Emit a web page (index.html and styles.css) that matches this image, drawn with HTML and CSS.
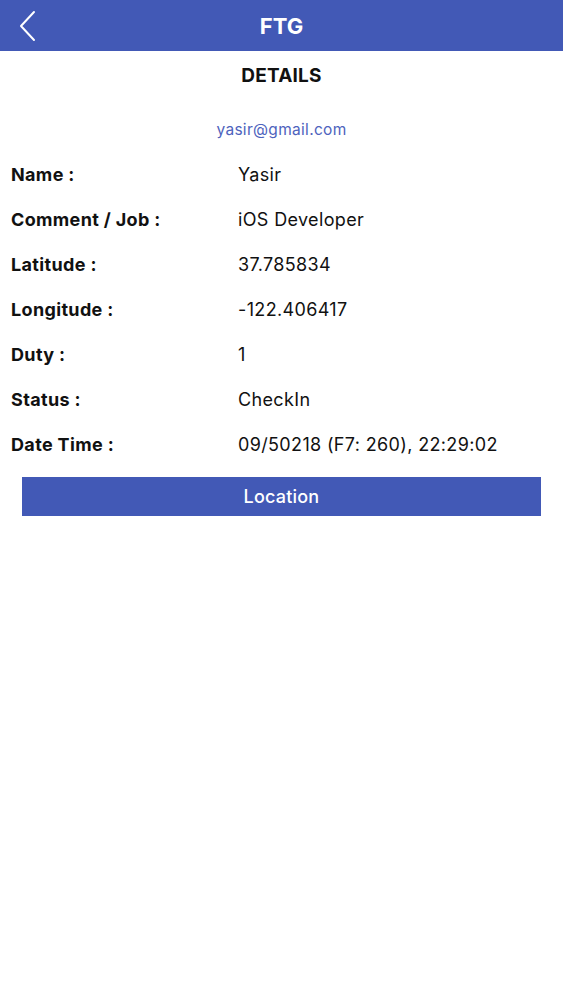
FILE: index.html
```html
<!DOCTYPE html>
<html lang="en">

<head>
    <meta charset="UTF-8">
    <meta name="viewport" content="width=device-width, initial-scale=1.0">
    <title>FTG - Details</title>
    <link rel="stylesheet" href="styles.css">
</head>

<body>

    <!-- Barra superior -->
    <header class="barra">
        <a class="atras" href="#">
            <svg width="20" height="32" viewBox="0 0 20 32">
                <path d="M16 2 L3 16 L16 30" fill="none" stroke="#fff" stroke-width="2" stroke-linecap="round" stroke-linejoin="round" />
            </svg>
        </a>
        <h1 class="titulo">FTG</h1>
    </header>

    <main class="detalles">
        <h2 class="subtitulo">DETAILS</h2>
        <p class="email">yasir@gmail.com</p>

        <div class="fila">
            <span class="etiqueta">Name :</span>
            <span class="valor">Yasir</span>
        </div>
        <div class="fila">
            <span class="etiqueta">Comment / Job :</span>
            <span class="valor">iOS Developer</span>
        </div>
        <div class="fila">
            <span class="etiqueta">Latitude :</span>
            <span class="valor">37.785834</span>
        </div>
        <div class="fila">
            <span class="etiqueta">Longitude :</span>
            <span class="valor">-122.406417</span>
        </div>
        <div class="fila">
            <span class="etiqueta">Duty :</span>
            <span class="valor">1</span>
        </div>
        <div class="fila">
            <span class="etiqueta">Status :</span>
            <span class="valor">CheckIn</span>
        </div>
        <div class="fila">
            <span class="etiqueta">Date Time :</span>
            <span class="valor">09/50218 (F7: 260), 22:29:02</span>
        </div>

        <button class="boton" type="button">Location</button>
    </main>

</body>

</html>
```

FILE: styles.css
```css
body {
    margin: 0;
    background: #fff;
    font-family: Inter, "Liberation Sans", Arial, sans-serif;
    color: #111;
}


.barra {
    height: 51px;
    background-color: #4259b6;
    display: flex;
    align-items: center;
    justify-content: center;
    position: relative;
}

.atras {
    position: absolute;
    left: 18px;
    top: 10px;
    display: block;
    line-height: 0;
}

.titulo {
    margin: 0;
    color: #fff;
    font-size: 22px;
    font-weight: bold;
}


.detalles {
    padding: 0 11px;
}

.subtitulo {
    margin: 0;
    padding-top: 13px;
    text-align: center;
    font-size: 19px;
    font-weight: 700;
    line-height: 24px;
    letter-spacing: 0.2px;
}

.email {
    margin: 32px 0 0;
    text-align: center;
    color: #4e63bd;
    font-size: 15.5px;
    line-height: 20px;
    letter-spacing: 0.3px;
}


.fila {
    display: grid;
    grid-template-columns: 227px 1fr;
    height: 45px;
    align-items: center;
    font-size: 18px;
    letter-spacing: 0.35px;
}

.fila:first-of-type {
    margin-top: 12px;
}

.etiqueta {
    font-weight: 700;
}


.boton {
    display: block;
    width: 519px;
    height: 39px;
    margin: 10px 0 0 11px;
    background-color: #4259b6;
    color: #fff;
    border: none;
    font-family: inherit;
    font-size: 18px;
    font-weight: 500;
    letter-spacing: 0.2px;
    cursor: pointer;
}
```
